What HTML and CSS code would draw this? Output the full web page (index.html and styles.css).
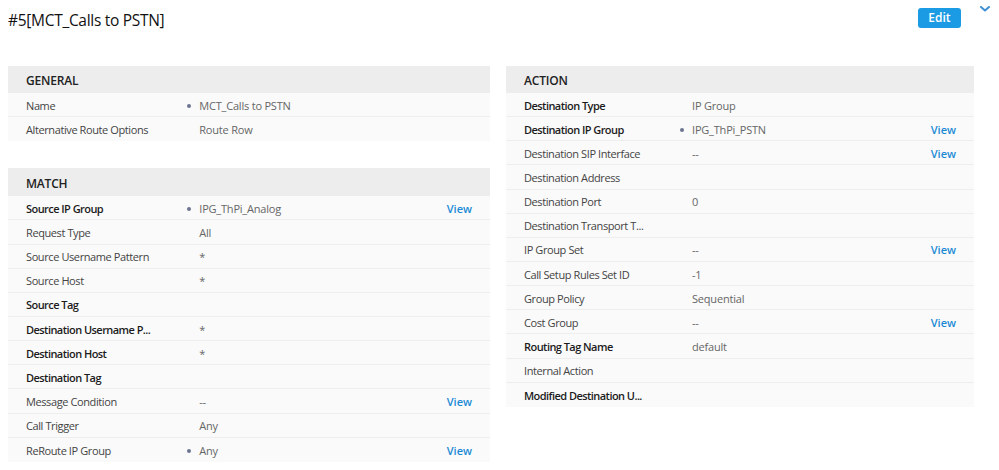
FILE: index.html
```html
<!DOCTYPE html>
<html>
<head>
<meta charset="utf-8">
<link rel="stylesheet" href="styles.css">
</head>
<body>
<div class="page">
  <div class="topbar">
    <h1 class="title">#5[MCT_Calls to PSTN]</h1>
    <button class="edit">Edit</button>
    <svg class="chev" width="10" height="6" viewBox="0 0 10 6"><path d="M1 1 L5 4.5 L9 1" fill="none" stroke="#3d8fd6" stroke-width="2" stroke-linecap="round" stroke-linejoin="round"/></svg>
  </div>
  <div class="columns">
    <div class="col left">
      <section class="panel">
        <div class="phead">GENERAL</div>
        <div class="row"><span class="lab">Name</span><span class="val bul">MCT_Calls to PSTN</span><span class="act"></span></div>
        <div class="row"><span class="lab">Alternative Route Options</span><span class="val">Route Row</span><span class="act"></span></div>
      </section>
      <section class="panel match">
        <div class="phead">MATCH</div>
        <div class="row"><span class="lab b">Source IP Group</span><span class="val bul">IPG_ThPi_Analog</span><span class="act">View</span></div>
        <div class="row"><span class="lab">Request Type</span><span class="val">All</span><span class="act"></span></div>
        <div class="row"><span class="lab">Source Username Pattern</span><span class="val">*</span><span class="act"></span></div>
        <div class="row"><span class="lab">Source Host</span><span class="val">*</span><span class="act"></span></div>
        <div class="row"><span class="lab b">Source Tag</span><span class="val"></span><span class="act"></span></div>
        <div class="row"><span class="lab b">Destination Username P...</span><span class="val">*</span><span class="act"></span></div>
        <div class="row"><span class="lab b">Destination Host</span><span class="val">*</span><span class="act"></span></div>
        <div class="row"><span class="lab b">Destination Tag</span><span class="val"></span><span class="act"></span></div>
        <div class="row"><span class="lab">Message Condition</span><span class="val">--</span><span class="act">View</span></div>
        <div class="row"><span class="lab">Call Trigger</span><span class="val">Any</span><span class="act"></span></div>
        <div class="row"><span class="lab">ReRoute IP Group</span><span class="val bul">Any</span><span class="act">View</span></div>
      </section>
    </div>
    <div class="col right">
      <section class="panel">
        <div class="phead">ACTION</div>
        <div class="row"><span class="lab b">Destination Type</span><span class="val">IP Group</span><span class="act"></span></div>
        <div class="row"><span class="lab b">Destination IP Group</span><span class="val bul">IPG_ThPi_PSTN</span><span class="act">View</span></div>
        <div class="row"><span class="lab">Destination SIP Interface</span><span class="val">--</span><span class="act">View</span></div>
        <div class="row"><span class="lab">Destination Address</span><span class="val"></span><span class="act"></span></div>
        <div class="row"><span class="lab">Destination Port</span><span class="val">0</span><span class="act"></span></div>
        <div class="row"><span class="lab">Destination Transport T...</span><span class="val"></span><span class="act"></span></div>
        <div class="row"><span class="lab">IP Group Set</span><span class="val">--</span><span class="act">View</span></div>
        <div class="row"><span class="lab">Call Setup Rules Set ID</span><span class="val">-1</span><span class="act"></span></div>
        <div class="row"><span class="lab">Group Policy</span><span class="val">Sequential</span><span class="act"></span></div>
        <div class="row"><span class="lab">Cost Group</span><span class="val">--</span><span class="act">View</span></div>
        <div class="row"><span class="lab b">Routing Tag Name</span><span class="val">default</span><span class="act"></span></div>
        <div class="row"><span class="lab">Internal Action</span><span class="val"></span><span class="act"></span></div>
        <div class="row"><span class="lab b">Modified Destination U...</span><span class="val"></span><span class="act"></span></div>
      </section>
    </div>
  </div>
</div>
</body>
</html>
```

FILE: styles.css
```css
* { box-sizing: border-box; }
html, body { margin: 0; padding: 0; background: #fff; }
body { font-family: "Open Sans", "DejaVu Sans", sans-serif; color: #333; }
.page { width: 999px; height: 470px; padding: 0 8px; overflow: hidden; }
.topbar { display: flex; align-items: flex-start; height: 66px; }
.title { margin: 9px 0 0 0; font-size: 15.5px; font-weight: 400; color: #111; letter-spacing: -0.3px; flex: 1; line-height: 22px; }
.edit { margin-top: 8px; width: 43px; height: 20px; border: none; border-radius: 3px; background: #1b9be4; color: #fff; font-family: inherit; font-size: 12px; font-weight: 600; padding: 0; line-height: 20px; }
.chev { margin: 6px 1px 0 19px; }
.columns { display: grid; grid-template-columns: 482px 468px; column-gap: 16px; align-items: start; }
.panel { background: #fafafa; }
.match { margin-top: 27px; }
.phead { height: 27px; background: #ededed; padding-left: 18px; font-size: 12px; font-weight: 600; color: #222; line-height: 29px; letter-spacing: -0.2px; }
.match .phead { height: 28px; line-height: 31px; }
.row { display: grid; grid-template-columns: 37.4% 1fr auto; height: 24.15px; align-items: center; border-bottom: 1px solid #eeeeee; font-size: 11px; line-height: 14px; padding-top: 2px; }
.row:last-child { border-bottom: none; }
.lab { padding-left: 18px; color: #444; white-space: nowrap; letter-spacing: -0.4px; }
.lab.b { color: #1c1c1c; font-weight: 600; letter-spacing: -0.55px; }
.val { color: #666; padding-left: 11px; position: relative; white-space: nowrap; letter-spacing: -0.2px; }
.val.bul::before { content: ""; position: absolute; left: -1px; top: 5px; width: 4px; height: 4px; border-radius: 50%; background: #6b7590; }
.act { color: #1a8ad6; font-weight: 600; padding-right: 18px; }
```
